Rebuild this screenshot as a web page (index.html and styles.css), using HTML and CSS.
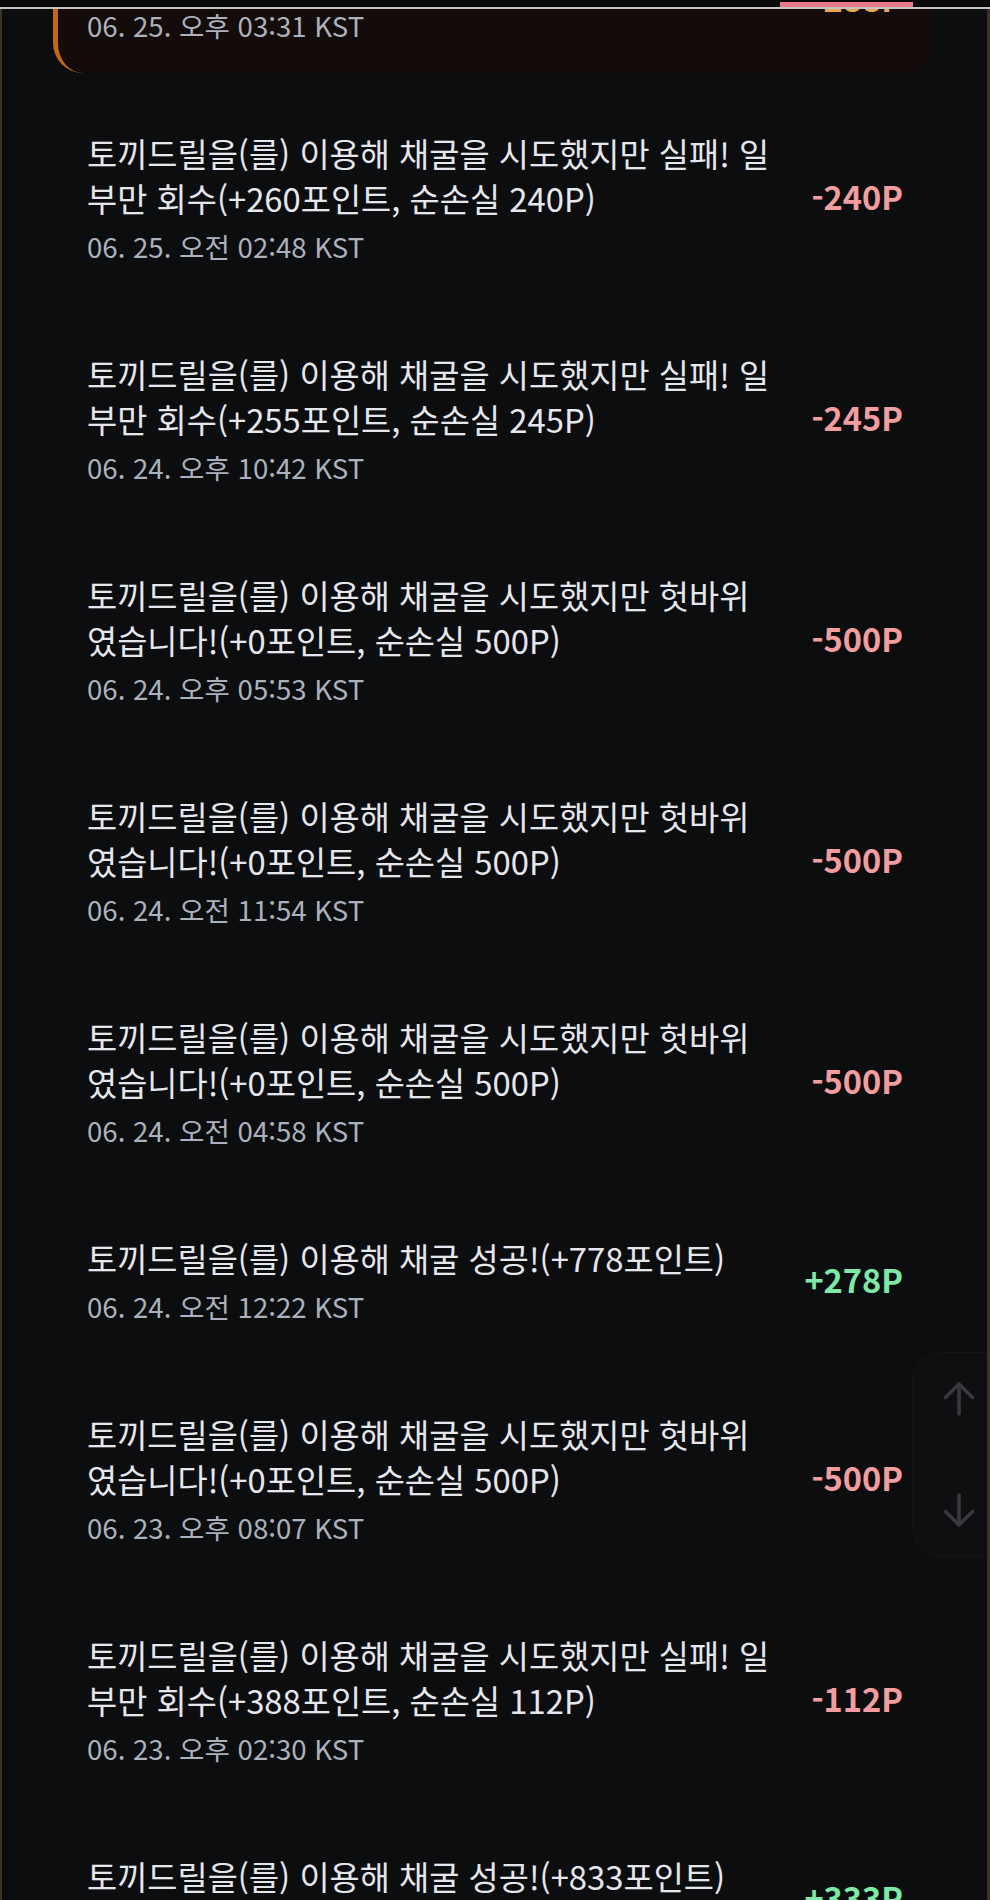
FILE: index.html
```html
<!DOCTYPE html>
<html lang="ko">
<head>
<meta charset="utf-8">
<title>포인트 내역</title>
<link rel="stylesheet" href="styles.css">
</head>
<body>
<header class="topbar">
  <span class="tab-indicator"></span>
</header>
<div class="frame">
  <ul class="history">
    <li class="item item-current">
      <div class="desc">
        <p class="title">토끼드릴을(를) 이용해 채굴 성공!(+788포인트)</p>
        <p class="date">06. 25. 오후 03:31 KST</p>
      </div>
      <span class="amount gold">+288P</span>
    </li>
    <li class="item">
      <div class="desc">
        <p class="title">토끼드릴을(를) 이용해 채굴을 시도했지만 실패! 일부만 회수(+260포인트, 순손실 240P)</p>
        <p class="date">06. 25. 오전 02:48 KST</p>
      </div>
      <span class="amount minus">-240P</span>
    </li>
    <li class="item">
      <div class="desc">
        <p class="title">토끼드릴을(를) 이용해 채굴을 시도했지만 실패! 일부만 회수(+255포인트, 순손실 245P)</p>
        <p class="date">06. 24. 오후 10:42 KST</p>
      </div>
      <span class="amount minus">-245P</span>
    </li>
    <li class="item">
      <div class="desc">
        <p class="title">토끼드릴을(를) 이용해 채굴을 시도했지만 헛바위였습니다!(+0포인트, 순손실 500P)</p>
        <p class="date">06. 24. 오후 05:53 KST</p>
      </div>
      <span class="amount minus">-500P</span>
    </li>
    <li class="item">
      <div class="desc">
        <p class="title">토끼드릴을(를) 이용해 채굴을 시도했지만 헛바위였습니다!(+0포인트, 순손실 500P)</p>
        <p class="date">06. 24. 오전 11:54 KST</p>
      </div>
      <span class="amount minus">-500P</span>
    </li>
    <li class="item">
      <div class="desc">
        <p class="title">토끼드릴을(를) 이용해 채굴을 시도했지만 헛바위였습니다!(+0포인트, 순손실 500P)</p>
        <p class="date">06. 24. 오전 04:58 KST</p>
      </div>
      <span class="amount minus">-500P</span>
    </li>
    <li class="item">
      <div class="desc">
        <p class="title">토끼드릴을(를) 이용해 채굴 성공!(+778포인트)</p>
        <p class="date">06. 24. 오전 12:22 KST</p>
      </div>
      <span class="amount plus">+278P</span>
    </li>
    <li class="item">
      <div class="desc">
        <p class="title">토끼드릴을(를) 이용해 채굴을 시도했지만 헛바위였습니다!(+0포인트, 순손실 500P)</p>
        <p class="date">06. 23. 오후 08:07 KST</p>
      </div>
      <span class="amount minus">-500P</span>
    </li>
    <li class="item">
      <div class="desc">
        <p class="title">토끼드릴을(를) 이용해 채굴을 시도했지만 실패! 일부만 회수(+388포인트, 순손실 112P)</p>
        <p class="date">06. 23. 오후 02:30 KST</p>
      </div>
      <span class="amount minus">-112P</span>
    </li>
    <li class="item">
      <div class="desc">
        <p class="title">토끼드릴을(를) 이용해 채굴 성공!(+833포인트)</p>
        <p class="date">06. 23. 오전 09:15 KST</p>
      </div>
      <span class="amount plus">+333P</span>
    </li>
  </ul>
  <div class="scroll-nav">
    <button class="scroll-btn" aria-label="위로">
      <svg viewBox="0 0 36 36" width="36" height="36"><path d="M18 33V3M4.5 16.5L18 3L31.5 16.5" fill="none" stroke="currentColor" stroke-width="3.6" stroke-linecap="round" stroke-linejoin="round"/></svg>
    </button>
    <button class="scroll-btn" aria-label="아래로">
      <svg viewBox="0 0 36 36" width="36" height="36"><path d="M18 3V33M4.5 19.5L18 33L31.5 19.5" fill="none" stroke="currentColor" stroke-width="3.6" stroke-linecap="round" stroke-linejoin="round"/></svg>
    </button>
  </div>
</div>
</body>
</html>
```

FILE: styles.css
```css
* { box-sizing: border-box; }

html, body {
  margin: 0;
  padding: 0;
  background: #0c0d0f;
  font-family: "Noto Sans CJK KR", "Noto Sans", sans-serif;
  color: #e5e7ec;
}

.topbar {
  height: 9px;
  background: #0a0a0a;
  border-bottom: 2px solid #c4c4c4;
  display: flex;
  align-items: flex-end;
  padding-left: 780px;
}

.tab-indicator {
  display: block;
  width: 133px;
  height: 5px;
  background: #e9798a;
}

.frame {
  position: relative;
  height: 1891px;
  overflow: hidden;
  border-left: 2px solid #3b3224;
  border-right: 3px solid #3b3224;
}

.history {
  list-style: none;
  margin: -85px 0 0 0;
  padding: 0 54px 0 51px;
  display: flex;
  flex-direction: column;
  gap: 27px;
}

.item {
  display: grid;
  grid-template-columns: 688px 1fr;
  align-items: center;
  padding: 30px 30px 32px 29px;
  border-left: 5px solid transparent;
  border-radius: 30px;
}

.item-current {
  background: #130c0a;
  border-left-color: #c2661c;
}

.desc p { margin: 0; }

.title {
  font-size: 32.8px;
  line-height: 45px;
  color: #e5e7ec;
}

.date {
  margin-top: 10px !important;
  font-size: 27.6px;
  line-height: 32px;
  color: #abb1bd;
}

.amount {
  text-align: right;
  font-size: 32.6px;
  font-weight: 700;
  line-height: 40px;
}

.minus { color: #f39d9f; }
.plus { color: #7de9a4; }
.gold { color: #eaa653; }

.scroll-nav {
  position: absolute;
  top: 1343px;
  right: 0;
  width: 75px;
  height: 205px;
  display: flex;
  flex-direction: column;
  justify-content: space-between;
  background: #0e0f11;
  border: 1px solid #151618;
  border-right: none;
  border-radius: 30px 0 0 30px;
}

.scroll-btn {
  height: 92px;
  display: flex;
  align-items: center;
  justify-content: center;
  padding: 0 0 0 17px;
  background: none;
  border: none;
  color: #38393c;
}
```
